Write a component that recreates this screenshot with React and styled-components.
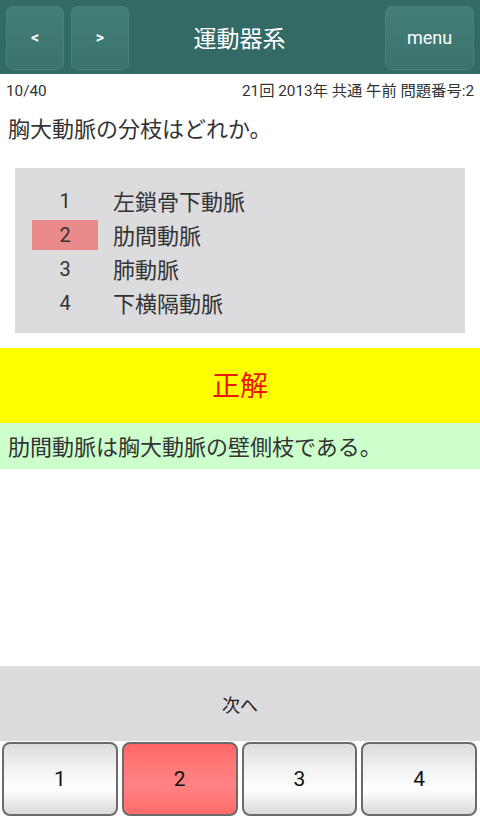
import React from "react";
import styled, { createGlobalStyle } from "styled-components";

const Global = createGlobalStyle`
  html, body { margin: 0; padding: 0; background: #fff; }
  body { font-family: Roboto, "Noto Sans CJK JP", sans-serif; }
  * { box-sizing: border-box; }
`;

const Screen = styled.div`
  width: 480px;
  height: 816px;
  display: flex;
  flex-direction: column;
  overflow: hidden;
  background: #fff;
`;

const Header = styled.header`
  height: 74px;
  flex: none;
  background: #346a66;
  display: flex;
  align-items: center;
  padding: 0 6px;
  gap: 7px;
`;

const HeadButton = styled.button`
  height: 64px;
  width: ${(p) => p.$w}px;
  margin-top: 1px;
  border-radius: 7px;
  border: 1px solid #4a817c;
  background: linear-gradient(#437d78, #3b746f);
  color: #fff;
  font-family: Roboto, "Noto Sans CJK JP", sans-serif;
  font-size: ${(p) => p.$fs}px;
  font-weight: ${(p) => (p.$bold ? 700 : 400)};
  display: flex;
  align-items: center;
  justify-content: center;
  padding: 0;
`;

const Title = styled.h1`
  flex: 1;
  margin: 0;
  text-align: center;
  color: #fff;
  font-size: 23px;
  font-weight: 400;
  font-family: "Noto Sans CJK JP", sans-serif;
  padding-right: 35px;
`;

const Content = styled.main`
  flex: 1;
  display: flex;
  flex-direction: column;
`;

const InfoRow = styled.div`
  display: flex;
  justify-content: space-between;
  padding: 7px 6px 0;
  height: 31px;
  font-size: 15.3px;
  color: #333;
  line-height: 20px;
`;

const Question = styled.p`
  margin: 0;
  padding: 10px 8px 0;
  height: 63px;
  font-size: 22px;
  line-height: 30px;
  color: #333;
`;

const ChoiceBox = styled.div`
  margin: 0 15px;
  background: #dcdbdd;
  padding: 16px 0 13px 17px;
  display: flex;
  flex-direction: column;
`;

const ChoiceRow = styled.div`
  height: 34px;
  display: flex;
  align-items: center;
  gap: 15px;
  font-size: 22px;
  color: #333;
`;

const ChoiceText = styled.span`
  margin-top: -3px;
`;

const ChoiceNum = styled.span`
  width: 66px;
  height: 30px;
  display: flex;
  align-items: center;
  justify-content: center;
  background: ${(p) => (p.$hit ? "#ea8a8a" : "transparent")};
  font-size: 20px;
`;

const Verdict = styled.div`
  margin-top: 15px;
  height: 75px;
  background: #ffff00;
  color: #e8160c;
  font-size: 28px;
  display: flex;
  align-items: center;
  justify-content: center;
  padding-bottom: 3px;
`;

const Explanation = styled.div`
  height: 46px;
  background: #ccffcc;
  color: #333;
  font-size: 22px;
  display: flex;
  align-items: center;
  padding: 0 8px 2px;
`;

const NextBar = styled.button`
  height: 75px;
  flex: none;
  border: none;
  background: #dcdbdd;
  color: #222;
  font-family: "Noto Sans CJK JP", sans-serif;
  font-size: 18px;
  padding: 0;
`;

const AnswerRow = styled.div`
  height: 75px;
  flex: none;
  display: grid;
  grid-template-columns: repeat(4, 1fr);
  gap: 4px;
  padding: 1px 3px 0 2px;
  background: #fff;
`;

const AnswerButton = styled.button`
  border: 2px solid #6b6b6b;
  border-radius: 8px;
  background: ${(p) =>
    p.$on
      ? "linear-gradient(#ff6666 0%, #ff7a7a 35%, #ff8383 60%, #ff6a6a 100%)"
      : "linear-gradient(#dcdcdc 0%, #f2f2f2 35%, #ffffff 65%, #dadada 100%)"};
  color: #111;
  font-family: Roboto, sans-serif;
  font-size: 21px;
  padding: 0;
`;

const choices = ["左鎖骨下動脈", "肋間動脈", "肺動脈", "下横隔動脈"];

export default function App() {
  return (
    <>
      <Global />
      <Screen>
        <Header>
          <HeadButton $w={58} $fs={16} $bold>&lt;</HeadButton>
          <HeadButton $w={58} $fs={16} $bold>&gt;</HeadButton>
          <Title>運動器系</Title>
          <HeadButton $w={89} $fs={18}>menu</HeadButton>
        </Header>
        <Content>
          <InfoRow>
            <span>10/40</span>
            <span>21回 2013年 共通 午前 問題番号:2</span>
          </InfoRow>
          <Question>胸大動脈の分枝はどれか。</Question>
          <ChoiceBox>
            {choices.map((c, i) => (
              <ChoiceRow key={c}>
                <ChoiceNum $hit={i === 1}>{i + 1}</ChoiceNum>
                <ChoiceText>{c}</ChoiceText>
              </ChoiceRow>
            ))}
          </ChoiceBox>
          <Verdict>正解</Verdict>
          <Explanation>肋間動脈は胸大動脈の壁側枝である。</Explanation>
        </Content>
        <NextBar>次へ</NextBar>
        <AnswerRow>
          {[1, 2, 3, 4].map((n) => (
            <AnswerButton key={n} $on={n === 2}>
              {n}
            </AnswerButton>
          ))}
        </AnswerRow>
      </Screen>
    </>
  );
}
